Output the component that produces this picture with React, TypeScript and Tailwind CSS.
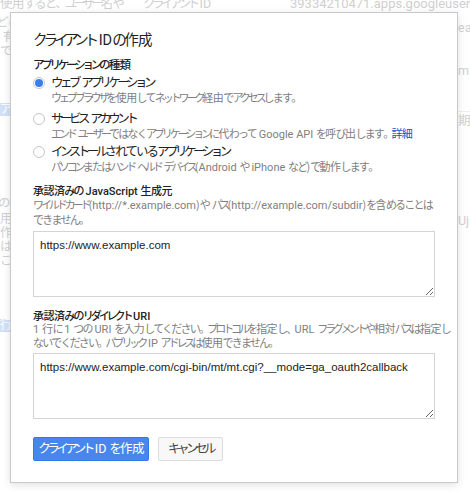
import React from 'react';

const font =
  "font-['Roboto','Noto_Sans_CJK_JP',sans-serif] [font-variant-east-asian:proportional-width]";

function tightClass(run: string) {
  if (/^[\u30A0-\u30FF]/.test(run)) return 'tracking-[-0.28em]';
  if (/^[\u3040-\u309F]/.test(run)) return 'tracking-[-0.16em]';
  if (/^[\u3000-\u303F]/.test(run)) return 'tracking-[-0.25em]';
  if (/^[\u4E00-\u9FFF]/.test(run)) return 'tracking-[-0.05em]';
  return '';
}

function J({ t }: { t: string }) {
  const runs =
    t.match(/[\u30A0-\u30FF]+|[\u3040-\u309F]+|[\u3000-\u303F]+|[\u4E00-\u9FFF]+|[^\u3000-\u9FFF]+/g) ?? [];
  return (
    <>
      {runs.map((r, i) => (
        <span key={i} className={tightClass(r)}>
          {r}
        </span>
      ))}
    </>
  );
}

function Radio({ checked }: { checked?: boolean }) {
  return (
    <span className="flex h-[12px] w-[12px] shrink-0 items-center justify-center rounded-full border border-[#c6c6c6] bg-white">
      {checked && <span className="h-[8px] w-[8px] rounded-full bg-[#3b7ded]" />}
    </span>
  );
}

function Option({ label, desc, checked }: { label: string; desc: React.ReactNode; checked?: boolean }) {
  return (
    <div>
      <div className="flex h-[18px] items-center gap-[6px]">
        <Radio checked={checked} />
        <span className="whitespace-nowrap text-[12.5px] leading-[18px] text-[#222]">
          <J t={label} />
        </span>
      </div>
      <div className="whitespace-nowrap pl-[18px] text-[11px] leading-[14px] text-[#808080]">{desc}</div>
    </div>
  );
}

export default function App() {
  return (
    <div className={`relative h-[493px] w-[470px] overflow-hidden bg-white ${font}`}>
      {/* page behind the dialog */}
      <div className="text-[12.5px] text-[#d0d0d0]">
        <div className="-mt-[3px] flex h-[14px] whitespace-nowrap leading-[14px]">
          <span className="w-[143px] shrink-0 overflow-hidden">
            <J t="使用すると、ユーザー名や" />
          </span>
          <span className="w-[147px] shrink-0">
            <J t="クライアント ID" />
          </span>
          <span className="text-[13px]">39334210471.apps.googleusercontent.com</span>
        </div>
        <div className="flex justify-between">
          <div className="flex w-[40px] flex-col whitespace-nowrap leading-[14px]">
            <span className="-ml-[4px] mt-[5px]">どのように</span>
            <span className="ml-[3px]">有効</span>
            <span>できます</span>
            <span className="mt-[45px] h-[13px] w-[14px] bg-[#d2e1fa] text-[12px] leading-[13px] text-white">ア</span>
            <span className="-ml-[2px] mt-[80px]">の</span>
            <span className="mt-[2px]">用途</span>
            <span>作成</span>
            <span>は</span>
            <span>こ</span>
            <span className="mt-[51px] h-[13px] w-[14px] bg-[#d2e1fa] text-[12px] leading-[13px] text-white">行</span>
          </div>
          <div className="flex w-[12px] flex-col whitespace-nowrap leading-[14px]">
            <span className="mt-[10px]">ea</span>
            <span className="mt-[29px]">m</span>
            <span className="mt-[33px] border-t border-[#eeeeee] pt-[2px]">期限</span>
            <span className="mt-[86px]">Uj</span>
          </div>
        </div>
      </div>

      {/* dialog */}
      <div className="absolute left-[10px] top-[12px] w-[448px] border border-[#c8c8c8] bg-white px-[22px] pb-[21px] pt-[18px] shadow-[0_2px_8px_rgba(0,0,0,0.12)]">
        <h1 className="whitespace-nowrap text-[14.5px] leading-[20px] text-[#222]">
          <J t="クライアント IDの作成" />
        </h1>
        <div className="mt-[7px] whitespace-nowrap text-[11.5px] font-medium leading-[14px] text-[#222]">
          <J t="アプリケーションの種類" />
        </div>
        <div className="mt-[2px] flex flex-col">
          <Option checked label="ウェブ アプリケーション" desc={<J t="ウェブブラウザを使用してネットワーク経由でアクセスします。" />} />
          <div className="mt-[4px]">
            <Option
              label="サービス アカウント"
              desc={
                <>
                  <J t="エンド ユーザーではなくアプリケーションに代わって Google API を呼び出します。" />
                  <span className="tracking-[-0.05em] text-[#1155cc]">詳細</span>
                </>
              }
            />
          </div>
          <div className="mt-[1px]">
            <Option label="インストールされているアプリケーション" desc={<J t="パソコンまたはハンド ヘルド デバイス（Android や iPhone など）で動作します。" />} />
          </div>
        </div>

        <div className="mt-[10px] whitespace-nowrap text-[11px] font-medium leading-[13px] text-[#222]">
          <J t="承認済みの JavaScript 生成元" />
        </div>
        <div className="whitespace-nowrap text-[11px] leading-[15px] text-[#808080]">
          <J t="ワイルドカード（http://*.example.com）や パス（http://example.com/subdir）を含めることは" />
          <br />
          <J t="できません。" />
        </div>
        <textarea
          readOnly
          defaultValue="https://www.example.com"
          className="mt-[3px] block h-[66px] w-full resize-y border border-[#d4d4d4] px-[6px] py-[5px] font-['Liberation_Sans',Arial,sans-serif] text-[11.5px] leading-[16px] text-[#222] outline-none"
        />

        <div className="mt-[13px] whitespace-nowrap text-[11px] font-medium leading-[13px] text-[#222]">
          <J t="承認済みのリダイレクト URI" />
        </div>
        <div className="whitespace-nowrap text-[11px] leading-[14px] text-[#808080]">
          <J t="1 行に 1 つの URI を入力してください。プロトコルを指定し、URL フラグメントや相対パスは指定し" />
          <br />
          <J t="ないでください。パブリック IP アドレスは使用できません。" />
        </div>
        <textarea
          readOnly
          defaultValue="https://www.example.com/cgi-bin/mt/mt.cgi?__mode=ga_oauth2callback"
          className="mt-[2px] block h-[66px] w-full resize-y border border-[#d4d4d4] px-[6px] py-[5px] font-['Liberation_Sans',Arial,sans-serif] text-[11.5px] leading-[16px] text-[#222] outline-none"
        />

        <div className="mt-[18px] flex gap-[9px]">
          <button className="h-[24px] w-[116px] whitespace-nowrap rounded-[2px] border border-[#3079ed] bg-[#4787ed] text-[12.5px] text-white">
            <J t="クライアント ID を作成" />
          </button>
          <button className="h-[24px] w-[65px] whitespace-nowrap rounded-[2px] border border-[#dcdcdc] bg-[#f8f8f8] text-[12.5px] text-[#444]">
            <J t="キャンセル" />
          </button>
        </div>
      </div>
    </div>
  );
}
